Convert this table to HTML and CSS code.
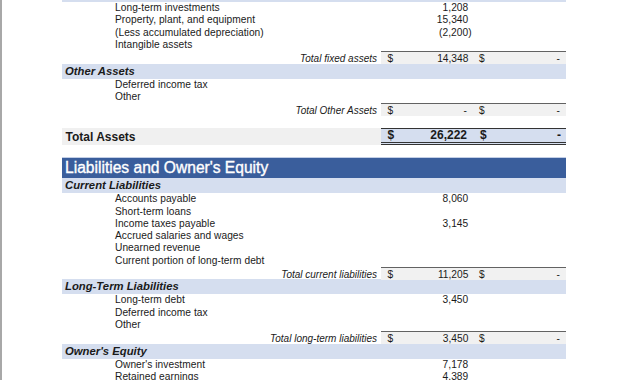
FILE: index.html
```html
<!DOCTYPE html>
<html>
<head>
<meta charset="utf-8">
<link rel="stylesheet" href="styles.css">
</head>
<body>
<div class="page">
  <div class="sheet">
    <div class="row hdr first"><div class="lbl">Fixed Assets</div><div></div><div></div></div>
    <div class="row item"><div class="lbl">Long-term investments</div><div class="num">1,208</div><div></div></div>
    <div class="row item"><div class="lbl">Property, plant, and equipment</div><div class="num">15,340</div><div></div></div>
    <div class="row item"><div class="lbl">(Less accumulated depreciation)</div><div class="num"><span class="neg">(2,200)</span></div><div></div></div>
    <div class="row item"><div class="lbl">Intangible assets</div><div class="num"></div><div></div></div>
    <div class="row total"><div class="lbl">Total fixed assets</div><div class="acc"><span>$</span><span class="amt">14,348</span></div><div class="acc"><span>$</span><span class="dash">-</span></div></div>
    <div class="row hdr"><div class="lbl">Other Assets</div><div></div><div></div></div>
    <div class="row item"><div class="lbl">Deferred income tax</div><div class="num"></div><div></div></div>
    <div class="row item"><div class="lbl">Other</div><div class="num"></div><div></div></div>
    <div class="row total"><div class="lbl">Total Other Assets</div><div class="acc"><span>$</span><span class="dash">-</span></div><div class="acc"><span>$</span><span class="dash">-</span></div></div>
    <div class="row blank"></div>
    <div class="row grand"><div class="lbl">Total Assets</div><div class="acc"><span>$</span><span class="amt">26,222</span></div><div class="acc"><span>$</span><span class="dash">-</span></div></div>
    <div class="row blank"></div>
    <div class="row title"><div class="lbl">Liabilities and Owner's Equity</div></div>
    <div class="row hdr"><div class="lbl">Current Liabilities</div><div></div><div></div></div>
    <div class="row item"><div class="lbl">Accounts payable</div><div class="num">8,060</div><div></div></div>
    <div class="row item"><div class="lbl">Short-term loans</div><div class="num"></div><div></div></div>
    <div class="row item"><div class="lbl">Income taxes payable</div><div class="num">3,145</div><div></div></div>
    <div class="row item"><div class="lbl">Accrued salaries and wages</div><div class="num"></div><div></div></div>
    <div class="row item"><div class="lbl">Unearned revenue</div><div class="num"></div><div></div></div>
    <div class="row item"><div class="lbl">Current portion of long-term debt</div><div class="num"></div><div></div></div>
    <div class="row total"><div class="lbl">Total current liabilities</div><div class="acc"><span>$</span><span class="amt">11,205</span></div><div class="acc"><span>$</span><span class="dash">-</span></div></div>
    <div class="row hdr"><div class="lbl">Long-Term Liabilities</div><div></div><div></div></div>
    <div class="row item"><div class="lbl">Long-term debt</div><div class="num">3,450</div><div></div></div>
    <div class="row item"><div class="lbl">Deferred income tax</div><div class="num"></div><div></div></div>
    <div class="row item"><div class="lbl">Other</div><div class="num"></div><div></div></div>
    <div class="row total tall"><div class="lbl">Total long-term liabilities</div><div class="acc"><span>$</span><span class="amt">3,450</span></div><div class="acc"><span>$</span><span class="dash">-</span></div></div>
    <div class="row hdr"><div class="lbl">Owner's Equity</div><div></div><div></div></div>
    <div class="row item"><div class="lbl">Owner's investment</div><div class="num">7,178</div><div></div></div>
    <div class="row item"><div class="lbl">Retained earnings</div><div class="num">4,389</div><div></div></div>
  </div>
</div>
</body>
</html>
```

FILE: styles.css
```css
html, body {
  margin: 0;
  padding: 0;
  background: #ffffff;
}
.page {
  width: 628px;
  height: 380px;
  overflow: hidden;
  border-left: 2px solid #a8a8a8;
  border-right: 1px solid #d4d4d4;
  background: #ffffff;
  font-family: "Liberation Sans", Arial, sans-serif;
  color: #1a1a1a;
}
.sheet {
  margin-left: 60px;
  width: 504px;
}
.row {
  display: grid;
  grid-template-columns: 319px 92px 93px;
  box-sizing: border-box;
  align-items: center;
}
.row > div {
  white-space: nowrap;
  overflow: visible;
}
.hdr {
  height: 15px;
  background: #d5deef;
  font-weight: bold;
  font-style: italic;
  font-size: 11.3px;
}
.hdr.first {
  margin-top: -13px;
}
.hdr .lbl {
  padding-left: 3px;
  line-height: 15px;
}
.item {
  height: 12.25px;
  font-size: 10.2px;
  line-height: 12.25px;
  letter-spacing: 0.05px;
}
.item .lbl {
  padding-left: 53px;
}
.num {
  text-align: right;
  padding-right: 4.7px;
}
.neg {
  margin-right: -3.4px;
}
.total {
  height: 12.7px;
  font-size: 10px;
}
.total.tall {
  height: 13px;
}
.total .lbl {
  font-style: italic;
  text-align: right;
  padding-right: 4px;
  padding-top: 2px;
  line-height: 11px;
}
.acc {
  display: flex;
  justify-content: space-between;
  align-items: center;
  height: 100%;
  box-sizing: border-box;
}
.total .acc {
  background: #f1f1f1;
  border-top: 1px solid #626262;
  padding-top: 1.5px;
  line-height: 10px;
  font-size: 10.2px;
}
.acc > span:first-child {
  padding-left: 6.5px;
}
.acc > .amt {
  padding-right: 4.7px;
}
.acc > .dash {
  padding-right: 6px;
}
.total .acc + .acc > span:first-child {
  padding-left: 6px;
}
.blank {
  height: 11.8px;
}
.grand {
  height: 17.8px;
  background: #f0f0f0;
  font-weight: bold;
  font-size: 12px;
}
.grand .lbl {
  padding-left: 3.5px;
}
.grand .acc {
  background: #d5deef;
  border-top: 1px solid #333333;
  border-bottom: 3px double #333333;
  font-size: 12px;
  line-height: 13px;
}
.grand .acc > .amt {
  padding-right: 6px;
}
.grand .acc + .acc > span:first-child {
  padding-left: 7px;
}
.grand .acc > .dash {
  padding-right: 5px;
}
.title {
  height: 21px;
  background: #3a5e9c;
  border-top: 1px solid #c3cfe6;
  color: #ffffff;
  font-size: 15.6px;
  grid-template-columns: 504px;
}
.title .lbl {
  padding-left: 3px;
  line-height: 20px;
  -webkit-text-stroke: 0.35px #ffffff;
}
```
